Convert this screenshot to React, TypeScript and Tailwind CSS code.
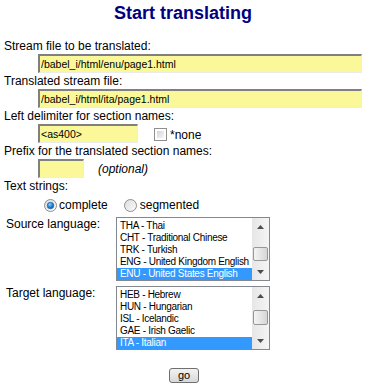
import React from "react";

function Radio({ checked }: { checked: boolean }) {
  return (
    <svg width="13" height="13" viewBox="0 0 13 13" className="shrink-0">
      <defs>
        <linearGradient id={checked ? "rgc" : "rgu"} x1="0" y1="0" x2="1" y2="1">
          <stop offset="0" stopColor="#dcdcdc" />
          <stop offset="1" stopColor="#fbfbfb" />
        </linearGradient>
        <radialGradient id="dot" cx="0.4" cy="0.35" r="0.7">
          <stop offset="0" stopColor="#8fd0ff" />
          <stop offset="0.5" stopColor="#2a8ad8" />
          <stop offset="1" stopColor="#0b4f93" />
        </radialGradient>
      </defs>
      <circle cx="6.5" cy="6.5" r="6" fill={`url(#${checked ? "rgc" : "rgu"})`} stroke="#8e8f8f" strokeWidth="1" />
      {checked && <circle cx="6.5" cy="6.5" r="3.3" fill="url(#dot)" stroke="#1c5f9c" strokeWidth="0.6" />}
    </svg>
  );
}

function Arrow({ up }: { up: boolean }) {
  return (
    <svg width="7" height="4" viewBox="0 0 7 4">
      {up ? <polygon points="0,4 7,4 3.5,0" fill="#4d4d4d" /> : <polygon points="0,0 7,0 3.5,4" fill="#4d4d4d" />}
    </svg>
  );
}

function ListBox({ items, thumbTop, thumbH }: { items: string[]; thumbTop: number; thumbH: number }) {
  return (
    <div className="w-[154px] h-[64px] border border-[#828790] bg-white flex">
      <div className="flex-1 pt-[2px] overflow-hidden font-['Liberation_Sans',Arial,sans-serif] text-[10px] tracking-[-0.3px]">
        {items.map((it, i) => {
          const sel = i === items.length - 1;
          return (
            <div
              key={it}
              className={
                sel
                  ? "h-[12px] leading-[12px] pl-[3px] whitespace-nowrap bg-[#3399ff] text-white"
                  : "h-[12px] leading-[12px] pl-[3px] whitespace-nowrap text-black"
              }
            >
              {it}
            </div>
          );
        })}
      </div>
      <div className="w-[17px] h-full flex flex-col bg-gradient-to-r from-[#e6e6e6] to-[#f5f5f5]">
        <div className="h-[17px] flex items-center justify-center">
          <Arrow up={true} />
        </div>
        <div className="flex-1 relative">
          <div
            className="absolute left-[1px] w-[15px] rounded-[2px] border border-[#979797] bg-gradient-to-r from-[#f4f4f4] to-[#d6d6d6]"
            style={{ top: thumbTop, height: thumbH }}
          />
        </div>
        <div className="h-[17px] flex items-center justify-center">
          <Arrow up={false} />
        </div>
      </div>
    </div>
  );
}

const inputCls =
  "box-border h-[19px] pl-[1px] bg-[#faf899] border-t-2 border-l-2 border-r border-b border-t-[#808080] border-l-[#808080] border-r-[#ececec] border-b-[#ececec] text-[10.5px] text-black font-['Liberation_Sans',Arial,sans-serif] outline-none";

export default function App() {
  return (
    <div className="w-[366px] h-[388px] bg-white text-black font-['Liberation_Sans',Arial,sans-serif] text-[12px]">
      <h1 className="pt-[3px] text-center text-[18px] leading-[21px] font-bold text-[#000080]">Start translating</h1>
      <div className="mt-[15px] pl-[4px]">
        <div className="leading-[15px]">Stream file to be translated:</div>
        <input readOnly value="/babel_i/html/enu/page1.html" className={inputCls + " ml-[34px] w-[324px] mb-[1px] block"} />
        <div className="leading-[15px]">Translated stream file:</div>
        <input readOnly value="/babel_i/html/ita/page1.html" className={inputCls + " ml-[34px] w-[324px] mb-[1px] block"} />
        <div className="leading-[15px]">Left delimiter for section names:</div>
        <div className="flex items-center h-[19px] mb-[1px]">
          <input readOnly value="<as400>" className={inputCls + " ml-[34px] w-[100px]"} />
          <span className="ml-[16px] w-[13px] h-[13px] border border-[#8f8f8f] bg-white p-[2px] mt-[2px] shrink-0">
            <span className="block w-full h-full bg-gradient-to-br from-[#d5d5d5] to-[#f7f7f7]" />
          </span>
          <span className="ml-[3px] mt-[3px]">*none</span>
        </div>
        <div className="leading-[15px]">Prefix for the translated section names:</div>
        <div className="flex items-center h-[19px] mb-[1px]">
          <input readOnly value="" className={inputCls + " ml-[34px] w-[46px]"} />
          <span className="ml-[14px] italic">(optional)</span>
        </div>
        <div className="leading-[15px]">Text strings:</div>
        <div className="flex items-center h-[22px]">
          <span className="ml-[40px]"><Radio checked={true} /></span>
          <span className="ml-[2px]">complete</span>
          <span className="ml-[16px]"><Radio checked={false} /></span>
          <span className="ml-[3px]">segmented</span>
        </div>
        <div className="flex items-start mt-[1px]">
          <div className="w-[112px] pl-[2px] leading-[15px]">Source language:</div>
          <ListBox
            items={["THA - Thai", "CHT - Traditional Chinese", "TRK - Turkish", "ENG - United Kingdom English", "ENU - United States English"]}
            thumbTop={12}
            thumbH={14}
          />
        </div>
        <div className="flex items-start mt-[5px]">
          <div className="w-[112px] pl-[2px] leading-[15px]">Target language:</div>
          <ListBox
            items={["HEB - Hebrew", "HUN - Hungarian", "ISL - Icelandic", "GAE - Irish Gaelic", "ITA - Italian"]}
            thumbTop={6}
            thumbH={15}
          />
        </div>
      </div>
      <div className="flex justify-center pl-[2px] mt-[18px]">
        <button className="w-[30px] h-[15px] rounded-[3px] border border-[#707070] bg-gradient-to-b from-[#f2f2f2] to-[#d8d8d8] text-[11px] leading-[13px] text-black font-['Liberation_Sans',Arial,sans-serif]">
          go
        </button>
      </div>
    </div>
  );
}
